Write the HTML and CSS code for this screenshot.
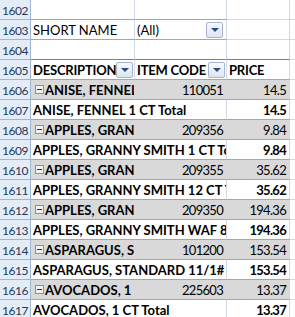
FILE: index.html
```html
<!DOCTYPE html>
<html>
<head>
    <link rel="stylesheet" href="styles.css">
</head>
<body>
    <div class="sheet">
        <div class="row">
            <div class="num">1602</div>
            <div class="cell b edge-grey"></div>
            <div class="cell c edge-grey"></div>
            <div class="cell d"></div>
            <div class="cell e"></div>
        </div>
        <div class="row">
            <div class="num">1603</div>
            <div class="cell b edge-grey">SHORT NAME</div>
            <div class="cell c edge-grey"><span class="txt">(All)</span><span class="drop"></span></div>
            <div class="cell d"></div>
            <div class="cell e"></div>
        </div>
        <div class="row">
            <div class="num">1604</div>
            <div class="cell b edge-dark"></div>
            <div class="cell c edge-dark"></div>
            <div class="cell d edge-dark"></div>
            <div class="cell e"></div>
        </div>
        <div class="row head">
            <div class="num">1605</div>
            <div class="cell b"><span class="txt">DESCRIPTION</span><span class="drop"></span></div>
            <div class="cell c"><span class="txt">ITEM CODE</span><span class="drop"></span></div>
            <div class="cell d">PRICE</div>
            <div class="cell e"></div>
        </div>

        <div class="row item">
            <div class="num">1606</div>
            <div class="cell b"><span class="toggle"></span>ANISE, FENNEL 1 CT</div>
            <div class="cell c val">110051</div>
            <div class="cell d val">14.5</div>
            <div class="cell e"></div>
        </div>
        <div class="row total">
            <div class="num">1607</div>
            <div class="cell bc">ANISE, FENNEL 1 CT Total</div>
            <div class="cell d val">14.5</div>
            <div class="cell e"></div>
        </div>
        <div class="row item">
            <div class="num">1608</div>
            <div class="cell b"><span class="toggle"></span>APPLES, GRANNY SMITH 1 CT</div>
            <div class="cell c val">209356</div>
            <div class="cell d val">9.84</div>
            <div class="cell e"></div>
        </div>
        <div class="row total">
            <div class="num">1609</div>
            <div class="cell bc">APPLES, GRANNY SMITH 1 CT Total</div>
            <div class="cell d val">9.84</div>
            <div class="cell e"></div>
        </div>
        <div class="row item">
            <div class="num">1610</div>
            <div class="cell b"><span class="toggle"></span>APPLES, GRANNY SMITH 12 CT</div>
            <div class="cell c val">209355</div>
            <div class="cell d val">35.62</div>
            <div class="cell e"></div>
        </div>
        <div class="row total">
            <div class="num">1611</div>
            <div class="cell bc">APPLES, GRANNY SMITH 12 CT Total</div>
            <div class="cell d val">35.62</div>
            <div class="cell e"></div>
        </div>
        <div class="row item">
            <div class="num">1612</div>
            <div class="cell b"><span class="toggle"></span>APPLES, GRANNY SMITH WAF 88 CT</div>
            <div class="cell c val">209350</div>
            <div class="cell d val">194.36</div>
            <div class="cell e"></div>
        </div>
        <div class="row total">
            <div class="num">1613</div>
            <div class="cell bc">APPLES, GRANNY SMITH WAF 88 CT Total</div>
            <div class="cell d val">194.36</div>
            <div class="cell e"></div>
        </div>
        <div class="row item">
            <div class="num">1614</div>
            <div class="cell b"><span class="toggle"></span>ASPARAGUS, STANDARD 11/1#</div>
            <div class="cell c val">101200</div>
            <div class="cell d val">153.54</div>
            <div class="cell e"></div>
        </div>
        <div class="row total">
            <div class="num">1615</div>
            <div class="cell bc">ASPARAGUS, STANDARD 11/1# Total</div>
            <div class="cell d val">153.54</div>
            <div class="cell e"></div>
        </div>
        <div class="row item">
            <div class="num">1616</div>
            <div class="cell b"><span class="toggle"></span>AVOCADOS, 1 CT</div>
            <div class="cell c val">225603</div>
            <div class="cell d val">13.37</div>
            <div class="cell e"></div>
        </div>
        <div class="row total">
            <div class="num">1617</div>
            <div class="cell bc">AVOCADOS, 1 CT Total</div>
            <div class="cell d val">13.37</div>
            <div class="cell e"></div>
        </div>
    </div>
</body>
</html>
```

FILE: styles.css
```css
body {
    margin: 0;
    padding: 0;
    background: #fff;
    overflow: hidden;
    font-family: Lato, "Liberation Sans", sans-serif;
    font-size: 13px;
    color: #000;
}

.sheet {
    display: flex;
    flex-direction: column;
}

.row {
    display: flex;
    height: 20px;
}

.num {
    box-sizing: border-box;
    width: 31px;
    height: 20px;
    flex: none;
    background: #E4ECF7;
    border-right: 1px solid #9EB6CE;
    border-bottom: 1px solid #9EB6CE;
    color: #1E395B;
    font-size: 12px;
    letter-spacing: -0.4px;
    text-align: center;
    line-height: 21px;
}

.cell {
    box-sizing: border-box;
    height: 20px;
    flex: none;
    display: flex;
    align-items: center;
    padding: 1px 3px 0 2px;
    border-right: 1px solid #D0D7E5;
    border-bottom: 1px solid #D0D7E5;
    white-space: nowrap;
    overflow: hidden;
}

.b { width: 104px; }
.c { width: 92px; }
.bc { width: 196px; }
.d { width: 63px; }
.e { flex: 1; border-right: none; }

.txt {
    flex: 1;
}

.val {
    justify-content: flex-end;
    letter-spacing: -0.7px;
}

.edge-grey {
    border-bottom-color: #A6A6A6;
}

.edge-dark {
    border-bottom-color: #7F7F7F;
}

/* pivot rows */
.head .b, .head .c, .head .d {
    font-weight: bold;
    letter-spacing: -0.2px;
    border-bottom-color: #A6A6A6;
    padding-right: 1px;
}

.head .d {
    padding-right: 3px;
}

.item .b, .item .c, .item .d {
    background: #D9D9D9;
    border-right-color: #D9D9D9;
    border-bottom-color: #A6A6A6;
}

.item .b {
    font-weight: bold;
    padding-left: 4px;
}

.total .bc, .total .d {
    font-weight: bold;
    border-bottom-color: #A6A6A6;
}

/* dropdown filter button */
.drop {
    box-sizing: border-box;
    width: 17px;
    height: 16px;
    flex: none;
    margin-top: -1px;
    border: 1px solid #A3B5CF;
    border-radius: 2px;
    background: linear-gradient(#F8FAFD, #DCE5F1);
    display: flex;
    align-items: center;
    justify-content: center;
}

.drop::after {
    content: "";
    border-left: 4px solid transparent;
    border-right: 4px solid transparent;
    border-top: 4px solid #2A4A8A;
}

/* collapse box */
.toggle {
    box-sizing: border-box;
    width: 9px;
    height: 9px;
    flex: none;
    margin: 0 1px 1px 0;
    border: 1px solid #8E8E8E;
    background: #F2F2F2;
    display: flex;
    align-items: center;
    justify-content: center;
}

.toggle::after {
    content: "";
    width: 5px;
    height: 1px;
    background: #333;
}
```
